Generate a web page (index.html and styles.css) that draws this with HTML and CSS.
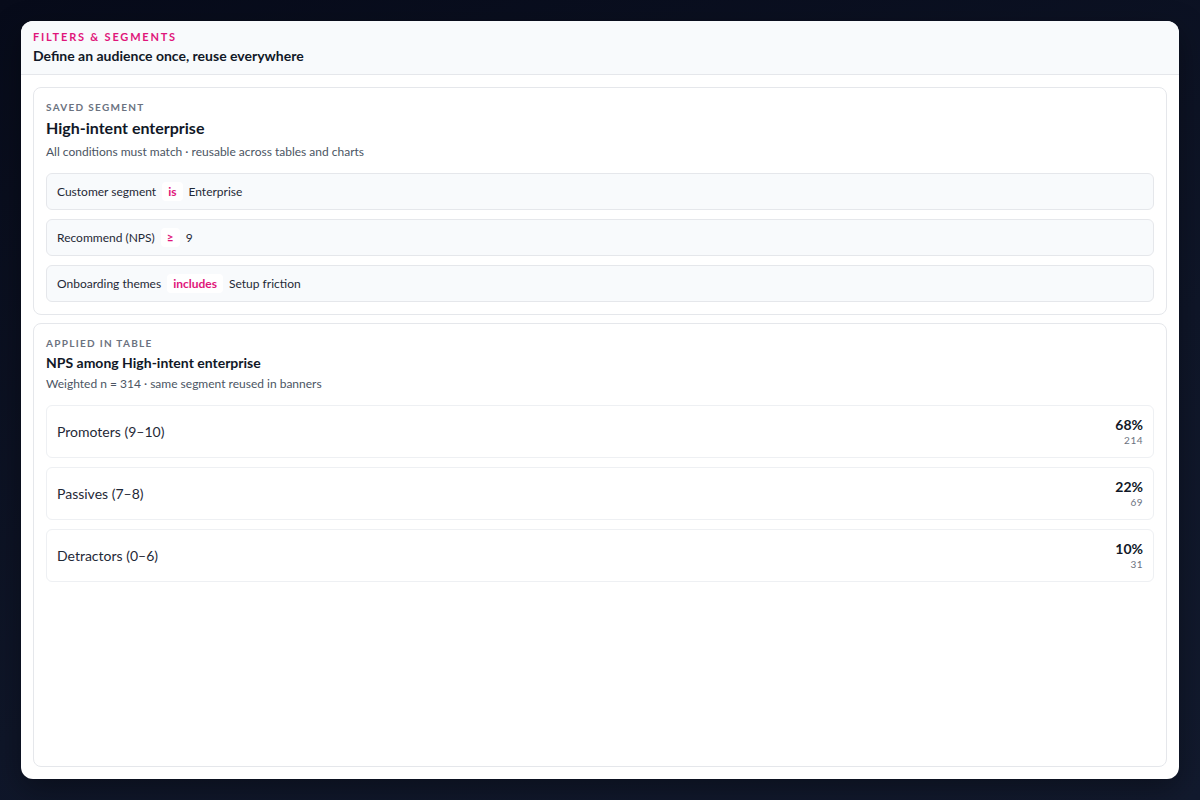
FILE: index.html
```html
<!DOCTYPE html>
<html lang="en">
<head>
    <meta charset="UTF-8">
    <meta name="viewport" content="width=device-width, initial-scale=1.0">
    <title>Filters &amp; Segments</title>
    <link rel="stylesheet" href="styles.css">
</head>
<body>

<div class="panel">
    <div class="panel-head">
        <p class="eyebrow">Filters &amp; Segments</p>
        <h1>Define an audience once, reuse everywhere</h1>
    </div>

    <div class="panel-body">
        <!-- Saved segment definition -->
        <section class="card">
            <p class="kicker">Saved segment</p>
            <h2 class="seg-title">High-intent enterprise</h2>
            <p class="sub">All conditions must match · reusable across tables and charts</p>

            <div class="rows">
                <div class="cond">
                    <span>Customer segment</span>
                    <span class="op">is</span>
                    <span>Enterprise</span>
                </div>
                <div class="cond">
                    <span>Recommend (NPS)</span>
                    <span class="op">≥</span>
                    <span>9</span>
                </div>
                <div class="cond">
                    <span>Onboarding themes</span>
                    <span class="op">includes</span>
                    <span>Setup friction</span>
                </div>
            </div>
        </section>

        <!-- Segment applied to a table -->
        <section class="card card-fill">
            <p class="kicker">Applied in table</p>
            <h2 class="table-title">NPS among High-intent enterprise</h2>
            <p class="sub">Weighted n = 314 · same segment reused in banners</p>

            <div class="rows">
                <div class="result">
                    <span class="label">Promoters (9–10)</span>
                    <div class="nums">
                        <span class="pct">68%</span>
                        <span class="count">214</span>
                    </div>
                </div>
                <div class="result">
                    <span class="label">Passives (7–8)</span>
                    <div class="nums">
                        <span class="pct">22%</span>
                        <span class="count">69</span>
                    </div>
                </div>
                <div class="result">
                    <span class="label">Detractors (0–6)</span>
                    <div class="nums">
                        <span class="pct">10%</span>
                        <span class="count">31</span>
                    </div>
                </div>
            </div>
        </section>
    </div>
</div>

</body>
</html>
```

FILE: styles.css
```css
/* General Styling */
* {
    margin: 0;
    padding: 0;
    box-sizing: border-box;
}

html, body {
    height: 100%;
}

body {
    font-family: Lato, "Noto Sans", sans-serif;
    background: linear-gradient(160deg, #070b1a 0%, #0f1629 60%, #121a2e 100%);
    color: #111827;
    padding: 21px;
}

/* Outer panel */
.panel {
    height: 100%;
    background: #fff;
    border-radius: 12px;
    overflow: hidden;
    display: flex;
    flex-direction: column;
    box-shadow: 0 10px 30px rgba(0, 0, 0, 0.35);
}

.panel-head {
    background: #f8fafc;
    border-bottom: 1px solid #e5e7eb;
    padding: 9px 12px 9px;
}

.eyebrow {
    font-size: 11px;
    line-height: 14px;
    font-weight: 700;
    letter-spacing: 1.8px;
    text-transform: uppercase;
    color: #e0157a;
}

.panel-head h1 {
    margin-top: 3px;
    font-size: 14px;
    line-height: 18px;
    font-weight: 700;
    color: #111827;
}

.panel-body {
    flex: 1;
    padding: 12px;
    display: flex;
    flex-direction: column;
    gap: 8px;
}

/* Cards */
.card {
    border: 1px solid #e5e7eb;
    border-radius: 8px;
    padding: 12px;
}

.card-fill {
    flex: 1;
}

.kicker {
    font-size: 10px;
    line-height: 14px;
    font-weight: 700;
    letter-spacing: 1.3px;
    text-transform: uppercase;
    color: #6b7280;
}

.seg-title {
    margin-top: 4px;
    font-size: 16px;
    line-height: 20px;
    font-weight: 700;
}

.table-title {
    margin-top: 4px;
    font-size: 14px;
    line-height: 18px;
    font-weight: 700;
}

.sub {
    margin-top: 6px;
    font-size: 12px;
    line-height: 16px;
    color: #4b5563;
}

.table-title + .sub {
    margin-top: 4px;
}

.rows {
    margin-top: 13px;
    display: flex;
    flex-direction: column;
    gap: 9px;
}

/* Condition rows */
.cond {
    display: flex;
    align-items: center;
    gap: 6px;
    min-height: 37px;
    padding: 0 10px;
    background: #f8fafc;
    border: 1px solid #e5e7eb;
    border-radius: 6px;
    font-size: 12px;
    line-height: 19px;
    color: #1f2937;
}

.op {
    background: #fff;
    border-radius: 4px;
    padding: 0 6px;
    line-height: 19px;
    font-weight: 700;
    color: #e0157a;
}

/* Result rows */
.result {
    display: flex;
    align-items: center;
    justify-content: space-between;
    padding: 10px;
    border: 1px solid #eef0f3;
    border-radius: 6px;
}

.label {
    font-size: 14px;
    color: #1f2937;
}

.nums {
    display: flex;
    flex-direction: column;
    align-items: flex-end;
}

.pct {
    font-size: 14px;
    line-height: 18px;
    font-weight: 700;
    color: #111827;
}

.count {
    font-size: 10px;
    line-height: 13px;
    color: #6b7280;
    letter-spacing: 0.5px;
}
```
